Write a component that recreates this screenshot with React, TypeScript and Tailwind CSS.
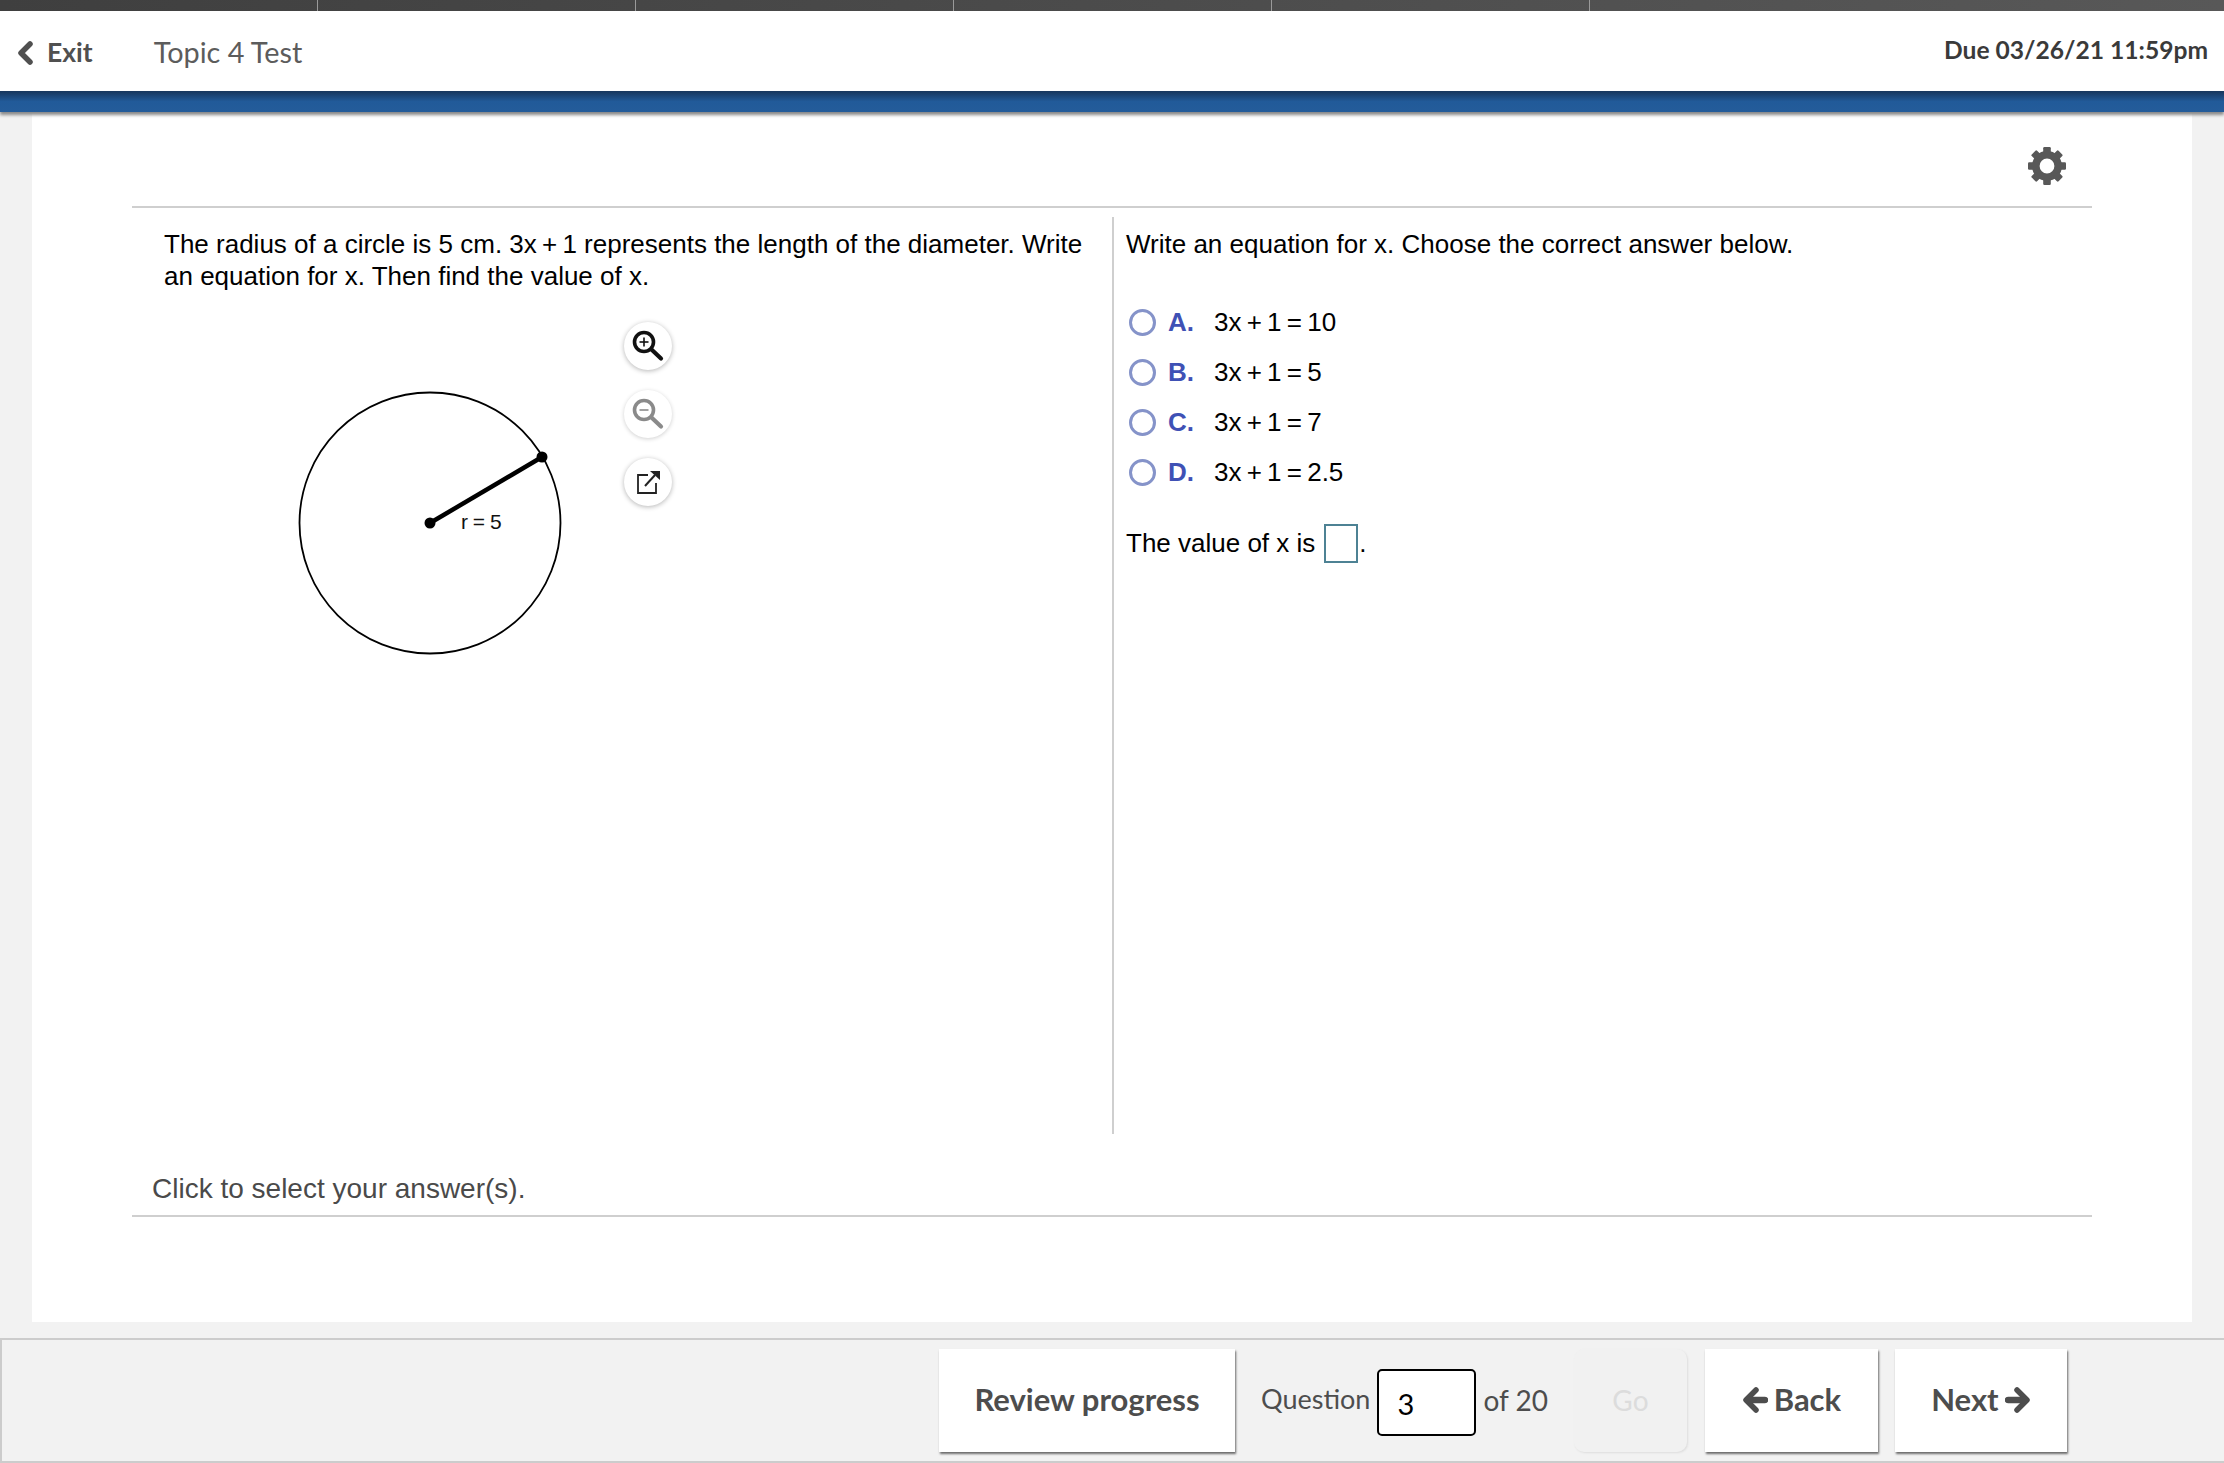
const options = [
  { letter: "A.", text: "3x + 1 = 10" },
  { letter: "B.", text: "3x + 1 = 5" },
  { letter: "C.", text: "3x + 1 = 7" },
  { letter: "D.", text: "3x + 1 = 2.5" },
];

const gearTeeth = [0, 45, 90, 135, 180, 225, 270, 315];

function GearIcon() {
  return (
    <svg width="38" height="38" viewBox="0 0 38 38" fill="#585858">
      <circle cx="19" cy="19" r="11.2" fill="none" stroke="#585858" strokeWidth="7.6" />
      {gearTeeth.map((deg) => (
        <rect key={deg} x="15.2" y="0" width="7.6" height="7" rx="1.2" transform={`rotate(${deg} 19 19)`} />
      ))}
    </svg>
  );
}

function ChevronIcon() {
  return (
    <svg width="16" height="24" viewBox="0 0 16 24" fill="none" stroke="#505050">
      <path d="M13 3 L4 12 L13 21" strokeWidth="5.5" strokeLinecap="round" strokeLinejoin="round" />
    </svg>
  );
}

function ArrowIcon({ right }: { right?: boolean }) {
  return (
    <svg width="26" height="28" viewBox="0 0 26 28" fill="none" stroke="#4d4d4d" className={right ? "-scale-x-100" : ""}>
      <path d="M14 4 L4 14 L14 24" strokeWidth="5.5" strokeLinecap="round" strokeLinejoin="round" />
      <path d="M6 14 H23" strokeWidth="6.5" strokeLinecap="round" />
    </svg>
  );
}

function ZoomIcon({ minus }: { minus?: boolean }) {
  const color = minus ? "#8a8a8a" : "#111111";
  return (
    <svg width="34" height="34" viewBox="0 0 34 34" fill="none" stroke={color}>
      <circle cx="13" cy="13" r="9.5" strokeWidth="3.6" />
      <path d="M20.5 20.5 L30 29.5" strokeWidth="4.2" strokeLinecap="round" />
      <path d="M8.5 13 H17.5" strokeWidth="1.6" />
      {!minus && <path d="M13 8.5 V17.5" strokeWidth="1.6" />}
    </svg>
  );
}

function ExternalIcon() {
  return (
    <svg width="26" height="26" viewBox="0 0 26 26" fill="none" stroke="#222222">
      <path d="M13 6 H3 V24 H21 V14" strokeWidth="1.8" />
      <path d="M10 17 L20 6" strokeWidth="2" />
      <path d="M15 2 H25 V11 Z" fill="#222222" stroke="none" />
    </svg>
  );
}

function CircleFigure() {
  return (
    <svg width="270" height="270" viewBox="0 0 270 270" className="mt-[96px] ml-[131px]">
      <circle cx="135" cy="135" r="130.5" fill="none" stroke="#000000" strokeWidth="1.8" />
      <path d="M135 135 L247 69" stroke="#000000" strokeWidth="4.5" />
      <circle cx="135" cy="135" r="5.5" fill="#000000" />
      <circle cx="247" cy="69" r="5.5" fill="#000000" />
      <text x="166" y="141" fontSize="21" wordSpacing="-1" fontFamily="Liberation Sans, Arial, sans-serif" fill="#111111">
        r = 5
      </text>
    </svg>
  );
}

function FooterButton({ className, children }: { className: string; children: React.ReactNode }) {
  return (
    <button className={`h-[103px] bg-white flex items-center justify-center gap-[6px] pb-[2px] text-[31px] font-bold text-[#4d4d4d] shadow-[1px_2px_2px_#6b6b6b] ${className}`}>
      {children}
    </button>
  );
}

export default function App() {
  return (
    <div className="w-[2224px] h-[1463px] flex flex-col bg-[#f2f2f2] overflow-hidden font-['Lato',sans-serif]">
      <div className="h-[11px] grid grid-cols-[318px_318px_318px_318px_318px_1fr] bg-gradient-to-r from-[#3f3f3f] to-[#585858]">
        <div className="border-r border-[#9a9a9a]" />
        <div className="border-r border-[#9a9a9a]" />
        <div className="border-r border-[#9a9a9a]" />
        <div className="border-r border-[#9a9a9a]" />
        <div className="border-r border-[#9a9a9a]" />
        <div />
      </div>

      <header className="h-[80px] bg-white flex items-center pl-[17px] pr-[16px] pt-[3px]">
        <ChevronIcon />
        <span className="ml-[14px] text-[26.5px] font-bold text-[#505050] mr-[61px]">Exit</span>
        <span className="text-[28.8px] text-[#5c5c5c]">Topic 4 Test</span>
        <span className="ml-auto text-[24.6px] font-bold text-[#3a3a3a] -mt-[4px]">Due 03/26/21 11:59pm</span>
      </header>

      <div className="h-[21px] bg-gradient-to-b from-[#17365c] via-[#215a99] to-[#245c9a] shadow-[0_3px_3px_#8a8a8a] relative" />

      <main className="mx-[32px] h-[1210px] bg-white px-[100px] font-['Liberation_Sans',Arial,sans-serif]">
        <div className="h-[96px] border-b-2 border-[#cfcfcf] flex justify-end items-start pt-[35px] pr-[26px]">
          <GearIcon />
        </div>

        <div className="h-[917px] mt-[9px] flex">
          <section className="w-[982px] border-r-2 border-[#cfcfcf] pt-[11px] pl-[32px] pr-[20px] text-[26px] leading-[32px] text-black">
            <p>
              {"The radius of a circle is 5 cm. 3x\u2009+\u20091 represents the length of the diameter. Write an equation for x. Then find the value of x."}
            </p>
            <div className="flex">
              <CircleFigure />
              <div className="flex flex-col gap-[20px] ml-[59px] mt-[30px]">
                <div className="w-[48px] h-[48px] rounded-full bg-white shadow-[0_1px_5px_#b5b5b5] flex items-center justify-center">
                  <ZoomIcon />
                </div>
                <div className="w-[48px] h-[48px] rounded-full bg-white shadow-[0_1px_4px_#d0d0d0] flex items-center justify-center">
                  <ZoomIcon minus />
                </div>
                <div className="w-[48px] h-[48px] rounded-full bg-white shadow-[0_1px_5px_#b5b5b5] flex items-center justify-center">
                  <ExternalIcon />
                </div>
              </div>
            </div>
          </section>

          <section className="pt-[11px] pl-[12px] text-[26px] leading-[33px] text-black">
            <p>Write an equation for x. Choose the correct answer below.</p>
            <div className="flex flex-col gap-[17px] mt-[45px]">
              {options.map((o) => (
                <div key={o.letter} className="flex items-center h-[33px]">
                  <span className="w-[27px] h-[27px] ml-[3px] rounded-full border-[3px] border-[#8593c9] bg-white" />
                  <span className="w-[46px] ml-[12px] font-bold text-[#3f51b5]">{o.letter}</span>
                  <span className="[word-spacing:-2px]">{o.text}</span>
                </div>
              ))}
            </div>
            <div className="flex items-center mt-[35px]">
              <span>The value of x is</span>
              <span className="w-[34px] h-[39px] ml-[9px] mr-[1px] border-2 border-[#4d8294]" />
              <span>.</span>
            </div>
          </section>
        </div>

        <div className="h-[83px] border-b-2 border-[#cfcfcf] flex items-end pl-[20px] pb-[5px] text-[28px] text-[#4a4a4a]">
          Click to select your answer(s).
        </div>
      </main>

      <footer className="mt-[16px] h-[125px] border-t-2 border-b-2 border-l-2 border-[#cccccc] flex items-center pl-[937px] text-[#4d4d4d]">
        <FooterButton className="w-[296px]">Review progress</FooterButton>
        <span className="ml-[26px] pb-[2px] text-[27px]">Question</span>
        <div className="w-[99px] h-[67px] ml-[7px] mt-[3px] bg-white border-2 border-black rounded-[5px] flex items-center pl-[18px] pt-[3px] text-[29px] text-black">
          3
        </div>
        <span className="ml-[7px] pb-[2px] text-[28px]">of 20</span>
        <div className="w-[113px] h-[103px] ml-[26px] rounded-[10px] bg-[#f1f1f1] shadow-[1px_1px_2px_#dddddd] flex items-center justify-center pb-[2px] text-[28px] text-[#dcdcdc]">
          Go
        </div>
        <FooterButton className="w-[173px] ml-[18px]">
          <ArrowIcon />
          Back
        </FooterButton>
        <FooterButton className="w-[172px] ml-[17px]">
          Next
          <ArrowIcon right />
        </FooterButton>
      </footer>
    </div>
  );
}
